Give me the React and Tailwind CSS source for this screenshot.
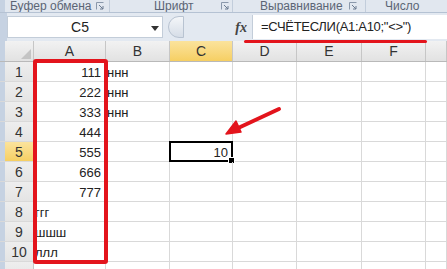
import React from "react";

const F = { fontFamily: '"Liberation Sans", Arial, sans-serif' };

function Launcher() {
  return (
    <svg width="8" height="8" viewBox="0 0 8 8" className="shrink-0">
      <path d="M0.5 7.5V0.5H7.5" fill="none" stroke="#8a98ab" strokeWidth="1" />
      <path d="M3 3L7 7M7 4V7H4" fill="none" stroke="#6b7b90" strokeWidth="1" />
    </svg>
  );
}

const cols = [
  { key: "A", w: "w-[72px]", label: "A" },
  { key: "B", w: "w-[64px]", label: "B" },
  { key: "C", w: "w-[63px]", label: "C" },
  { key: "D", w: "w-[64px]", label: "D" },
  { key: "E", w: "w-[65px]", label: "E" },
  { key: "F", w: "w-[64px]", label: "F" },
  { key: "G", w: "flex-1", label: "" },
];

const rows = [
  { n: 1, A: "111", B: "ннн" },
  { n: 2, A: "222", B: "ннн" },
  { n: 3, A: "333", B: "ннн" },
  { n: 4, A: "444" },
  { n: 5, A: "555", C: "10" },
  { n: 6, A: "666" },
  { n: 7, A: "777" },
  { n: 8, A: "ггг", left: true },
  { n: 9, A: "шшш", left: true },
  { n: 10, A: "ллл", left: true },
  { n: 11, hideNum: true },
];

export default function App() {
  return (
    <div className="relative w-[447px] h-[269px] overflow-hidden bg-white text-[#222]" style={F}>
      {/* ribbon group labels */}
      <div className="flex h-[13px] bg-[#e1e7ef] border-b border-[#b5c2d3] text-[12px] leading-[12px] text-[#5b6575] overflow-hidden">
        <div className="w-[5px] bg-[#c6d2e2]" />
        <div className="w-[105px] flex items-start justify-between pl-[5px] pr-[5px] border-r border-[#c2cddb]">
          <span>Буфер обмена</span>
          <span className="mt-[2px]"><Launcher /></span>
        </div>
        <div className="w-[123px] flex items-start justify-between pl-[44px] pr-[3px] border-r border-[#c2cddb]">
          <span>Шрифт</span>
          <span className="mt-[2px]"><Launcher /></span>
        </div>
        <div className="w-[133px] flex items-start justify-between pl-[27px] pr-[8px] border-r border-[#c2cddb]">
          <span>Выравнивание</span>
          <span className="mt-[2px]"><Launcher /></span>
        </div>
        <div className="flex-1 pl-[19px]">
          <span className="block">Число</span>
        </div>
      </div>

      {/* formula bar */}
      <div className="flex h-[28px] bg-[#e3e9f1] items-center">
        <div className="w-[7px] self-stretch bg-[#c6d2e2]" />
        <div className="w-[156px] h-[22px] bg-white border border-[#c3cdd9] flex items-center relative">
          <span className="flex-1 text-center text-[14px] pr-[10px]">C5</span>
          <svg width="8" height="5" viewBox="0 0 8 5" className="absolute right-[3px] top-[9px]">
            <path d="M0 0H8L4 5Z" fill="#333" />
          </svg>
        </div>
        <div className="ml-[5px] w-[84px] h-[22px] flex items-center relative">
          <div className="w-[16px] h-[22px] rounded-l-full border border-[#b8c3d1] bg-gradient-to-b from-[#f4f6f9] to-[#d6dde7]" />
          <div className="flex-1 h-[22px] flex items-center justify-end pr-[5px]">
            <span className="text-[14px] italic font-bold text-[#444]" style={{ fontFamily: '"Liberation Serif", serif' }}>fx</span>
          </div>
        </div>
        <div className="flex-1 h-[24px] bg-white border-l border-[#c3cdd9] flex items-center pl-[8px] text-[13px] tracking-[-0.3px]">
          =СЧЁТЕСЛИ(A1:A10;"&lt;&gt;")
        </div>
      </div>

      {/* column headers */}
      <div className="flex h-[21px] border-b border-[#b9b9b9] bg-gradient-to-b from-[#f2f2f2] to-[#e2e2e2] text-[14px] text-[#333]">
        <div className="w-[5px] bg-[#c6d2e2]" />
        <div className="w-[29px] border-r border-[#c6c6c6] relative">
          <svg width="10" height="10" viewBox="0 0 10 10" className="absolute right-[2px] bottom-[2px]">
            <path d="M10 0V10H0Z" fill="#c4c4c4" />
          </svg>
        </div>
        {cols.map((c) => (
          <div
            key={c.key}
            className={`${c.w} border-r border-[#c6c6c6] flex items-center justify-center ${c.key === "C" ? "bg-gradient-to-b from-[#fbe39c] to-[#f6cf62]" : ""}`}
          >
            {c.label}
          </div>
        ))}
      </div>

      {/* rows */}
      {rows.map((r) => (
        <div key={r.n} className="flex h-[20px] border-b border-[#d9d9d9] text-[13px]">
          <div className="w-[5px] bg-[#c6d2e2]" />
          <div
            className={`w-[29px] border-r border-[#c6c6c6] flex items-center justify-center pt-[2px] text-[14px] text-[#333] ${r.n === 5 ? "bg-gradient-to-b from-[#fbe39c] to-[#f6cf62]" : "bg-gradient-to-b from-[#eeeeee] to-[#e4e4e4]"}`}
          >
            {r.hideNum ? "" : r.n}
          </div>
          {cols.map((c) => {
            const v = r[c.key];
            const isActive = r.n === 5 && c.key === "C";
            return (
              <div
                key={c.key}
                className={`${c.w} border-r border-[#d9d9d9] flex items-center pt-[3px] relative ${
                  c.key === "A" && !r.left ? "justify-end pr-[4px]" : c.key === "C" ? "justify-end pr-[4px]" : "justify-start pl-[1px]"
                }`}
              >
                {v}
                {isActive && (
                  <>
                    <div className="absolute -left-[1px] -top-[1px] -right-[1px] -bottom-[1px] border-2 border-black" />
                    <div className="absolute -right-[3px] -bottom-[3px] w-[5px] h-[5px] bg-black border border-white box-content" />
                  </>
                )}
              </div>
            );
          })}
        </div>
      ))}

      {/* red highlight box around column A */}
      <div className="absolute left-[33px] top-[59px] w-[75px] h-[205px] border-[4px] border-[#e3141c] rounded-[3px]" />

      {/* red underline under formula */}
      <div className="absolute left-[244px] top-[40px] w-[183px] h-[3px] bg-[#e3141c] rounded-full" />

      {/* red arrow */}
      <svg className="absolute left-0 top-0" width="447" height="269" viewBox="0 0 447 269">
        <line x1="279" y1="109" x2="236" y2="129" stroke="#e3141c" strokeWidth="4" strokeLinecap="round" />
        <path d="M226 134 L236 121 L241 132 Z" fill="#e3141c" stroke="#e3141c" strokeWidth="1.5" strokeLinejoin="round" />
      </svg>
    </div>
  );
}
